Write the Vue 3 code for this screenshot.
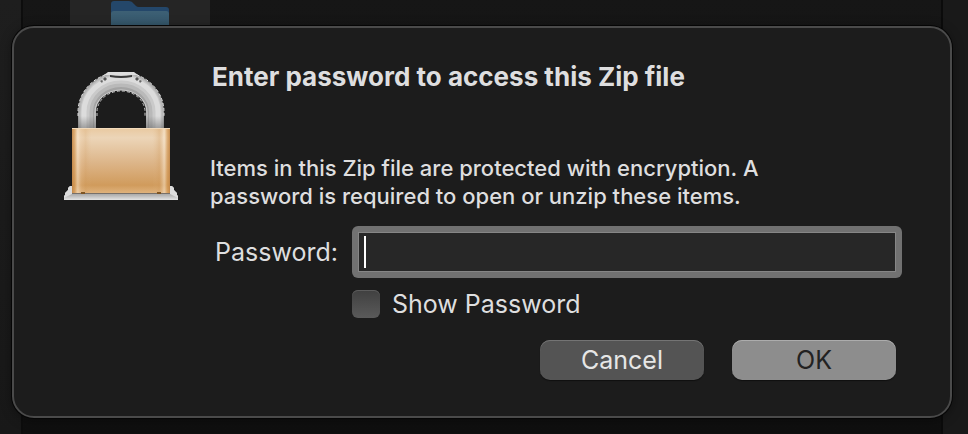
<template>
  <div class="desktop">
    <!-- dimmed Finder window behind the dialog -->
    <div class="sidebar"></div>
    <div class="files">
      <div class="file-item">
        <svg class="folder" viewBox="0 0 58 26" aria-hidden="true">
          <defs>
            <linearGradient id="folderFront" x1="0" y1="0" x2="0" y2="1">
              <stop offset="0" stop-color="#3d6075" />
              <stop offset="1" stop-color="#34566a" />
            </linearGradient>
          </defs>
          <path d="M0 26V4q0-3 3-3h15q3 0 5 3l2 2q1 1 3 1h27q3 0 3 3v16z" fill="#24476a" />
          <path d="M0 26V14q0-3 3-3h52q3 0 3 3v12z" fill="url(#folderFront)" />
        </svg>
      </div>
    </div>
    <div class="preview"></div>

    <form class="dialog" role="dialog" aria-labelledby="title" @submit.prevent>
      <svg class="lock" viewBox="64 72 114 128" aria-hidden="true">
        <defs>
          <linearGradient id="brass" x1="0" y1="0" x2="0" y2="1">
            <stop offset="0" stop-color="#e9c9a0" />
            <stop offset="0.15" stop-color="#ecd5b8" />
            <stop offset="0.55" stop-color="#dcb487" />
            <stop offset="0.88" stop-color="#d09b5c" />
            <stop offset="1" stop-color="#dfb27c" />
          </linearGradient>
          <linearGradient id="brassEdge" x1="0" y1="0" x2="1" y2="0">
            <stop offset="0" stop-color="#c08445" stop-opacity="0.9" />
            <stop offset="0.03" stop-color="#d59a55" stop-opacity="0.6" />
            <stop offset="0.06" stop-color="#fff2df" stop-opacity="0.45" />
            <stop offset="0.1" stop-color="#e9c295" stop-opacity="0.2" />
            <stop offset="0.14" stop-color="#d09a5c" stop-opacity="0.2" />
            <stop offset="0.2" stop-color="#dfb583" stop-opacity="0" />
            <stop offset="0.82" stop-color="#dfb583" stop-opacity="0" />
            <stop offset="0.89" stop-color="#d09a5c" stop-opacity="0.3" />
            <stop offset="0.94" stop-color="#fff2df" stop-opacity="0.45" />
            <stop offset="0.97" stop-color="#d59a55" stop-opacity="0.6" />
            <stop offset="1" stop-color="#c08445" stop-opacity="0.9" />
          </linearGradient>
          <linearGradient id="base" gradientUnits="userSpaceOnUse" x1="0" y1="192" x2="0" y2="200">
            <stop offset="0" stop-color="#9a9a9a" />
            <stop offset="0.4" stop-color="#b4b4b4" />
            <stop offset="1" stop-color="#e4e4e4" />
          </linearGradient>
          <linearGradient id="shade" x1="0" y1="0" x2="0" y2="1">
            <stop offset="0" stop-color="#555" stop-opacity="0" />
            <stop offset="1" stop-color="#555" stop-opacity="0.45" />
          </linearGradient>
        </defs>
        <path d="M70 186h102l2 2v2l3 3v2l1 1v4H64v-4l1-1v-2l3-3v-2z" fill="url(#base)" />
        <path d="M64 198v-2l1-1v-2l3-3v-2l2-2h2v8zM178 198v-2l-1-1v-2l-3-3v-2l-2-2h-2v8z" fill="#dcdcdc" />
        <!-- shackle, from dark rim to highlight -->
        <g fill="none">
          <path d="M87 128V112A34 31 0 0 1 155 112V128" stroke="#a4a4a4" stroke-width="18" />
          <path d="M86 128V112A35 32 0 0 1 156 112V128" stroke="#b9b9b9" stroke-width="14" />
          <path d="M85 128V112A36 33 0 0 1 157 112V128" stroke="#cacaca" stroke-width="9" />
          <path d="M84 128V112A37 34 0 0 1 158 112V128" stroke="#dcdcdc" stroke-width="5" />
          <path d="M95 128V112A26 22 0 0 1 147 112V128" stroke="#cfcfcf" stroke-width="1" />
          <path d="M97 116V112A24 21 0 0 1 145 112V116" stroke="#c8c8c8" stroke-width="1" stroke-dasharray="3 2" />
          <path d="M78 116V112A43 40 0 0 1 164 112V116" stroke="#e4e4e4" stroke-width="1" stroke-dasharray="3 2" />
        </g>
        <path d="M78 116h18v12H78zM146 116h18v12h-18z" fill="url(#shade)" />
        <path d="M108 72h26l4 3h-34z" fill="#dedede" />
        <path d="M110 75q11 2 22 0v2q-11 2-22 0z" fill="#3a3a3a" />
        <path d="M105 77l2 2-2 2-2-2zM137 77l2 2-2 2-2-2z" fill="#555" />
        <path d="M102 80l1 1-1 2-2-2zM140 80l2 1-2 2-1-2z" fill="#666" />
        <rect x="72" y="128" width="98" height="65" fill="url(#brass)" />
        <rect x="72" y="128" width="98" height="65" fill="url(#brassEdge)" />
        <path d="M72 128h98v1H72z" fill="#f2dabb" />
        <path d="M72 193h98v1H72z" fill="#77706a" />
        <path d="M81 192h4v2h-4zM157 192h4v2h-4z" fill="#7d5423" />
      </svg>

      <div class="content">
        <h1 id="title">Enter password to access this Zip file</h1>
        <p>Items in this Zip file are protected with encryption. A password is required to open or unzip these items.</p>

        <div class="row">
          <label for="password">Password:</label>
          <div class="field">
            <input id="password" v-model="password" :type="showPassword ? 'text' : 'password'" @input="typed = true" />
            <span v-if="!typed" class="caret"></span>
          </div>
        </div>

        <div class="show">
          <input id="show" v-model="showPassword" type="checkbox" />
          <label for="show">Show Password</label>
        </div>

        <div class="buttons">
          <button type="button" @click="password = ''">Cancel</button>
          <button type="submit" class="primary">OK</button>
        </div>
      </div>
    </form>
  </div>
</template>

<script setup>
import { ref } from 'vue';

const password = ref('');
const showPassword = ref(false);
const typed = ref(false);
</script>

<style>
body {
  margin: 0;
  background: #171717;
}
</style>

<style scoped>
.desktop {
  position: relative;
  display: grid;
  grid-template-columns: 23px 1fr 27px;
  min-height: 100vh;
  font-family: Inter, "Liberation Sans", sans-serif;
  color: #dededf;
}
.sidebar {
  background: linear-gradient(#1e1e1e, #181818);
  border-right: 2px solid #0d0d0d;
}
.files {
  background: linear-gradient(#161616, #0f0f0f);
}
.preview {
  background: #191919;
  border-left: 2px solid #0b0b0b;
}
.file-item {
  box-sizing: border-box;
  width: 140px;
  height: 40px;
  margin-left: 47px;
  padding-left: 41px;
  background: #252525;
}
.folder {
  display: block;
  width: 58px;
  height: 26px;
}
/* the dialog floats over the window */
.dialog {
  position: absolute;
  top: 26px;
  left: 12px;
  right: 16px;
  display: flex;
  align-items: flex-start;
  gap: 32px;
  padding: 33px 48px 36px 50px;
  border: 2px solid #4a4a4a;
  border-radius: 22px;
  background: #1c1c1c;
  box-shadow: 0 0 0 1px #050505, 0 2px 12px rgba(0, 0, 0, 0.4);
}
.lock {
  flex: none;
  width: 114px;
  height: 128px;
  margin-top: 11px;
}
.content {
  flex: 1;
}
h1 {
  margin: 0;
  padding-left: 2px;
  font-size: 26px;
  line-height: 32px;
  font-weight: 700;
}
p {
  max-width: 580px;
  margin: 61px 0 16px;
  font-size: 22px;
  line-height: 28px;
  font-weight: 500;
}
.row {
  display: flex;
  align-items: center;
  font-size: 25px;
}
.row label {
  box-sizing: border-box;
  width: 142px;
  padding-right: 14px;
  text-align: right;
}
.field {
  position: relative;
  flex: 1;
  padding: 6px;
  border-radius: 6px;
  background: #717171;
}
.field input {
  display: block;
  box-sizing: border-box;
  width: 100%;
  height: 40px;
  padding: 0 6px;
  border: 1px solid #868686;
  border-radius: 0;
  outline: none;
  background: #272727;
  color: inherit;
  font: inherit;
}
.caret {
  position: absolute;
  top: 10px;
  left: 12px;
  width: 2px;
  height: 32px;
  background: #fff;
}
.show {
  display: flex;
  align-items: center;
  gap: 12px;
  height: 28px;
  margin: 12px 0 22px 142px;
  font-size: 25px;
}
.show input {
  appearance: none;
  width: 28px;
  height: 28px;
  margin: 0;
  border-radius: 6px;
  background: linear-gradient(#404040, #5a5a5a);
  box-shadow: inset 0 1px #5c5c5c;
}
.show input:checked {
  background: #8e8e8e;
}
.buttons {
  display: flex;
  justify-content: flex-end;
  gap: 28px;
  margin-right: 6px;
}
button {
  width: 164px;
  height: 40px;
  padding: 0;
  border: 0;
  border-radius: 10px;
  background: #545454;
  box-shadow: inset 0 1px #747474, 0 1px 1px #101010;
  color: #e6e6e6;
  font: inherit;
  font-size: 25px;
}
.primary {
  background: #8d8d8d;
  box-shadow: inset 0 1px #acacac, 0 1px 1px #101010;
  color: #222;
}
</style>
